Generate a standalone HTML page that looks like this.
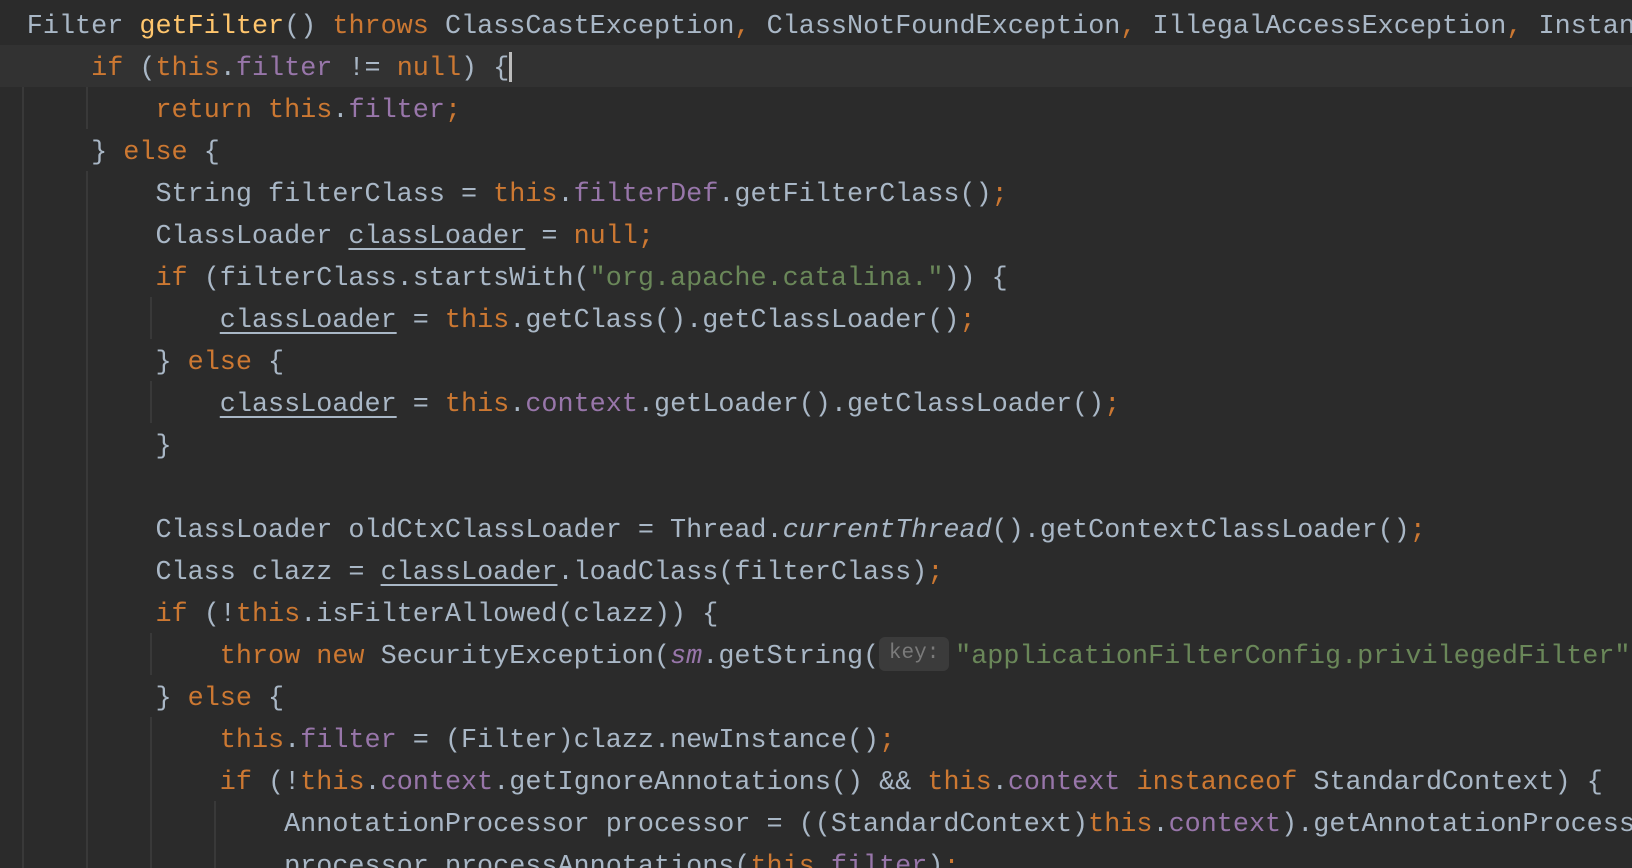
<!DOCTYPE html>
<html><head><meta charset="utf-8"><style>
html,body{margin:0;padding:0;background:#2b2b2b;width:1632px;height:868px;overflow:hidden}
#w{position:absolute;left:0;top:0;width:1632px;height:868px;overflow:hidden}
.l{position:absolute;left:26.8px;height:42px;line-height:42px;white-space:pre;font-family:"Liberation Mono",monospace;font-size:26.8px;color:#a9b7c6;margin-top:3px}
.k{color:#cc7832}.f{color:#9876aa}.m{color:#ffc66d}.s{color:#6a8759}.i{font-style:italic}
.u{text-decoration:underline;text-underline-offset:5px;text-decoration-thickness:1.5px}
.g{position:absolute;width:2px;background:#393939}
.cur{position:absolute;left:0;top:45px;width:1632px;height:42px;background:#323232}
.h{display:inline-block;width:70px;height:34px;line-height:34px;background:#3b3b3b;color:#7a7a7a;border-radius:6px;font-size:21px;text-align:center;vertical-align:middle;margin-right:6px;position:relative;top:-2px}
.c{position:absolute;left:509px;top:52px;width:3px;height:30px;background:#bbbbbb}
</style></head><body><div id="w">
<div class="cur"></div>
<div class="g" style="left:22px;top:87px;height:781px"></div>
<div class="g" style="left:86px;top:87px;height:42px"></div>
<div class="g" style="left:86px;top:171px;height:697px"></div>
<div class="g" style="left:150px;top:297px;height:42px"></div>
<div class="g" style="left:150px;top:381px;height:42px"></div>
<div class="g" style="left:150px;top:633px;height:42px"></div>
<div class="g" style="left:150px;top:717px;height:151px"></div>
<div class="g" style="left:214px;top:801px;height:67px"></div>
<div class="l" style="top:3px">Filter <span class="m">getFilter</span>() <span class="k">throws</span> ClassCastException<span class="k">,</span> ClassNotFoundException<span class="k">,</span> IllegalAccessException<span class="k">,</span> InstantiationException</div>
<div class="l" style="top:45px">    <span class="k">if</span> (<span class="k">this</span>.<span class="f">filter</span> != <span class="k">null</span>) {</div>
<div class="c"></div>
<div class="l" style="top:87px">        <span class="k">return this</span>.<span class="f">filter</span><span class="k">;</span></div>
<div class="l" style="top:129px">    } <span class="k">else</span> {</div>
<div class="l" style="top:171px">        String filterClass = <span class="k">this</span>.<span class="f">filterDef</span>.getFilterClass()<span class="k">;</span></div>
<div class="l" style="top:213px">        ClassLoader <span class="u">classLoader</span> = <span class="k">null;</span></div>
<div class="l" style="top:255px">        <span class="k">if</span> (filterClass.startsWith(<span class="s">"org.apache.catalina."</span>)) {</div>
<div class="l" style="top:297px">            <span class="u">classLoader</span> = <span class="k">this</span>.getClass().getClassLoader()<span class="k">;</span></div>
<div class="l" style="top:339px">        } <span class="k">else</span> {</div>
<div class="l" style="top:381px">            <span class="u">classLoader</span> = <span class="k">this</span>.<span class="f">context</span>.getLoader().getClassLoader()<span class="k">;</span></div>
<div class="l" style="top:423px">        }</div>
<div class="l" style="top:507px">        ClassLoader oldCtxClassLoader = Thread.<span class="i">currentThread</span>().getContextClassLoader()<span class="k">;</span></div>
<div class="l" style="top:549px">        Class clazz = <span class="u">classLoader</span>.loadClass(filterClass)<span class="k">;</span></div>
<div class="l" style="top:591px">        <span class="k">if</span> (!<span class="k">this</span>.isFilterAllowed(clazz)) {</div>
<div class="l" style="top:633px">            <span class="k">throw new</span> SecurityException(<span class="f i">sm</span>.getString(<span class="h">key:</span><span class="s">"applicationFilterConfig.privilegedFilter"</span><span class="k">,</span> filterClass))<span class="k">;</span></div>
<div class="l" style="top:675px">        } <span class="k">else</span> {</div>
<div class="l" style="top:717px">            <span class="k">this</span>.<span class="f">filter</span> = (Filter)clazz.newInstance()<span class="k">;</span></div>
<div class="l" style="top:759px">            <span class="k">if</span> (!<span class="k">this</span>.<span class="f">context</span>.getIgnoreAnnotations() &amp;&amp; <span class="k">this</span>.<span class="f">context</span> <span class="k">instanceof</span> StandardContext) {</div>
<div class="l" style="top:801px">                AnnotationProcessor processor = ((StandardContext)<span class="k">this</span>.<span class="f">context</span>).getAnnotationProcessor()<span class="k">;</span></div>
<div class="l" style="top:843px">                processor.processAnnotations(<span class="k">this</span>.<span class="f">filter</span>)<span class="k">;</span></div>
</div></body></html>
